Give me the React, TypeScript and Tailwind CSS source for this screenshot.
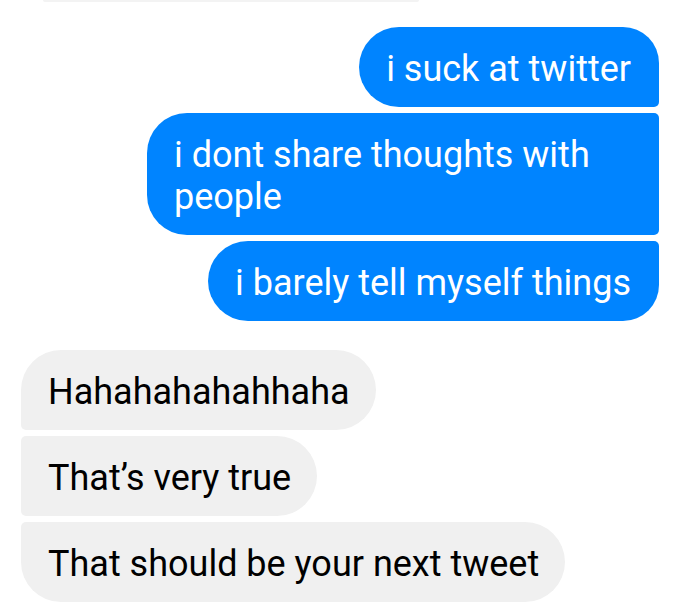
const sent = [
  { text: "i suck at twitter", corners: "rounded-l-[40px] rounded-tr-[36px] rounded-br-[5px]" },
  { text: "i dont share thoughts with people", corners: "rounded-l-[40px] rounded-r-[5px]" },
  { text: "i barely tell myself things", corners: "rounded-l-[40px] rounded-tr-[5px] rounded-br-[36px]" },
];

const received = [
  { text: "Hahahahahahhaha", corners: "rounded-r-[40px] rounded-tl-[40px] rounded-bl-[5px]" },
  { text: "That’s very true", corners: "rounded-r-[40px] rounded-l-[5px]" },
  { text: "That should be your next tweet", corners: "rounded-r-[40px] rounded-tl-[5px] rounded-bl-[40px]" },
];

export default function App() {
  return (
    <div
      className="w-[680px] h-[610px] bg-white overflow-hidden px-[21px]"
      style={{ fontFamily: "Roboto, 'Noto Sans', sans-serif" }}
    >
      {/* edge of the previous bubble */}
      <div className="ml-[22px] w-[376px] h-[2px] bg-[#f3f3f3] rounded-b" />

      {/* my messages */}
      <div className="mt-[25px] flex flex-col items-end gap-[6px]">
        {sent.map((m) => (
          <div
            key={m.text}
            className={`max-w-[512px] bg-[#0084ff] text-white text-[36px] leading-[42px] pl-[27px] pr-[28px] pt-[21px] pb-[17px] ${m.corners}`}
          >
            {m.text}
          </div>
        ))}
      </div>

      {/* their messages */}
      <div className="mt-[29px] flex flex-col items-start gap-[6px]">
        {received.map((m) => (
          <div
            key={m.text}
            className={`max-w-[560px] bg-[#f0f0f0] text-black text-[36px] leading-[42px] pl-[27px] pr-[26px] pt-[21px] pb-[17px] ${m.corners}`}
          >
            {m.text}
          </div>
        ))}
      </div>
    </div>
  );
}
